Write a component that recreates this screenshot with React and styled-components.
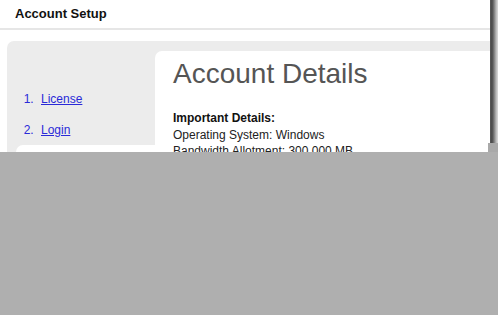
import styled, { createGlobalStyle } from "styled-components";

const GlobalStyle = createGlobalStyle`
  html, body {
    margin: 0;
    padding: 0;
    background: #ffffff;
  }
  body {
    font-family: "Liberation Sans", Arial, sans-serif;
  }
`;

const steps = [
  { label: "License", href: "#license" },
  { label: "Login", href: "#login" },
];

const details = [
  "Operating System: Windows",
  "Bandwidth Allotment: 300,000 MB",
];

export default function App() {
  return (
    <>
      <GlobalStyle />
      <Page>
        <Capture>
          <Window>
            <TitleBar>Account Setup</TitleBar>
            <Body>
              <Panel>
                <Sidebar>
                  <Steps>
                    {steps.map(({ label, href }) => (
                      <Step key={label}>
                        <a href={href}>{label}</a>
                      </Step>
                    ))}
                  </Steps>
                  <SideCard />
                </Sidebar>
                <Content>
                  <Heading>Account Details</Heading>
                  <Details>
                    <strong>Important Details:</strong>
                    {details.map((line) => (
                      <span key={line}>{line}</span>
                    ))}
                  </Details>
                </Content>
              </Panel>
            </Body>
          </Window>
          <Edge>
            <EdgeShade />
            <EdgeFoot />
          </Edge>
        </Capture>
        <Overlay />
      </Page>
    </>
  );
}

const Page = styled.div`
  display: flex;
  flex-direction: column;
  width: 498px;
  height: 315px;
  overflow: hidden;
`;

const Capture = styled.div`
  display: flex;
  height: 152px;
  overflow: hidden;
`;

const Window = styled.div`
  width: 490px;
  display: flex;
  flex-direction: column;
  background: #ffffff;
`;

const TitleBar = styled.div`
  height: 30px;
  box-sizing: border-box;
  padding: 6px 0 0 15px;
  font-size: 13px;
  line-height: 16px;
  font-weight: bold;
  color: #111111;
  border-bottom: 2px solid #e6e6e6;
  flex-shrink: 0;
`;

const Body = styled.div`
  padding: 11px 0 0 7px;
  flex: 1;
  display: flex;
`;

const Panel = styled.div`
  flex: 1;
  display: flex;
  background: #ececec;
  border-radius: 7px 0 0 0;
  padding-top: 10px;
`;

const Sidebar = styled.div`
  width: 148px;
  display: flex;
  flex-direction: column;
  flex-shrink: 0;
`;

const Steps = styled.ol`
  margin: 40px 0 0 0;
  padding: 0 0 0 30px;
  font-size: 12px;
  line-height: 16px;
  color: #2a2ad8;

  a {
    color: #2a2ad8;
  }
`;

const Step = styled.li`
  padding-left: 4px;
  & + & {
    margin-top: 15px;
  }
`;

const SideCard = styled.div`
  margin: 7px 0 0 9px;
  flex: 1;
  background: #ffffff;
  border-radius: 7px 0 0 0;
`;

const Content = styled.div`
  flex: 1;
  background: #ffffff;
  border-radius: 7px 0 0 0;
  padding: 7px 0 0 18px;
`;

const Heading = styled.h1`
  margin: 0;
  font-size: 28px;
  line-height: 32px;
  font-weight: normal;
  color: #555555;
`;

const Details = styled.div`
  margin-top: 20px;
  display: flex;
  flex-direction: column;
  font-size: 12px;
  line-height: 16.5px;
  color: #222222;

  strong {
    color: #111111;
  }
`;

const Edge = styled.div`
  width: 8px;
  display: flex;
  flex-direction: column;
`;

const EdgeShade = styled.div`
  flex: 1;
  background: linear-gradient(
    to right,
    #5a5a5a 0,
    #4a4a4a 2px,
    #7a7a7a 4px,
    #b4b4b4 6px,
    #dcdcdc 8px
  );
`;

const EdgeFoot = styled.div`
  height: 9px;
  margin-left: -2px;
  background: #a9a9a9;
`;

const Overlay = styled.div`
  flex: 1;
  background: #afafaf;
`;
